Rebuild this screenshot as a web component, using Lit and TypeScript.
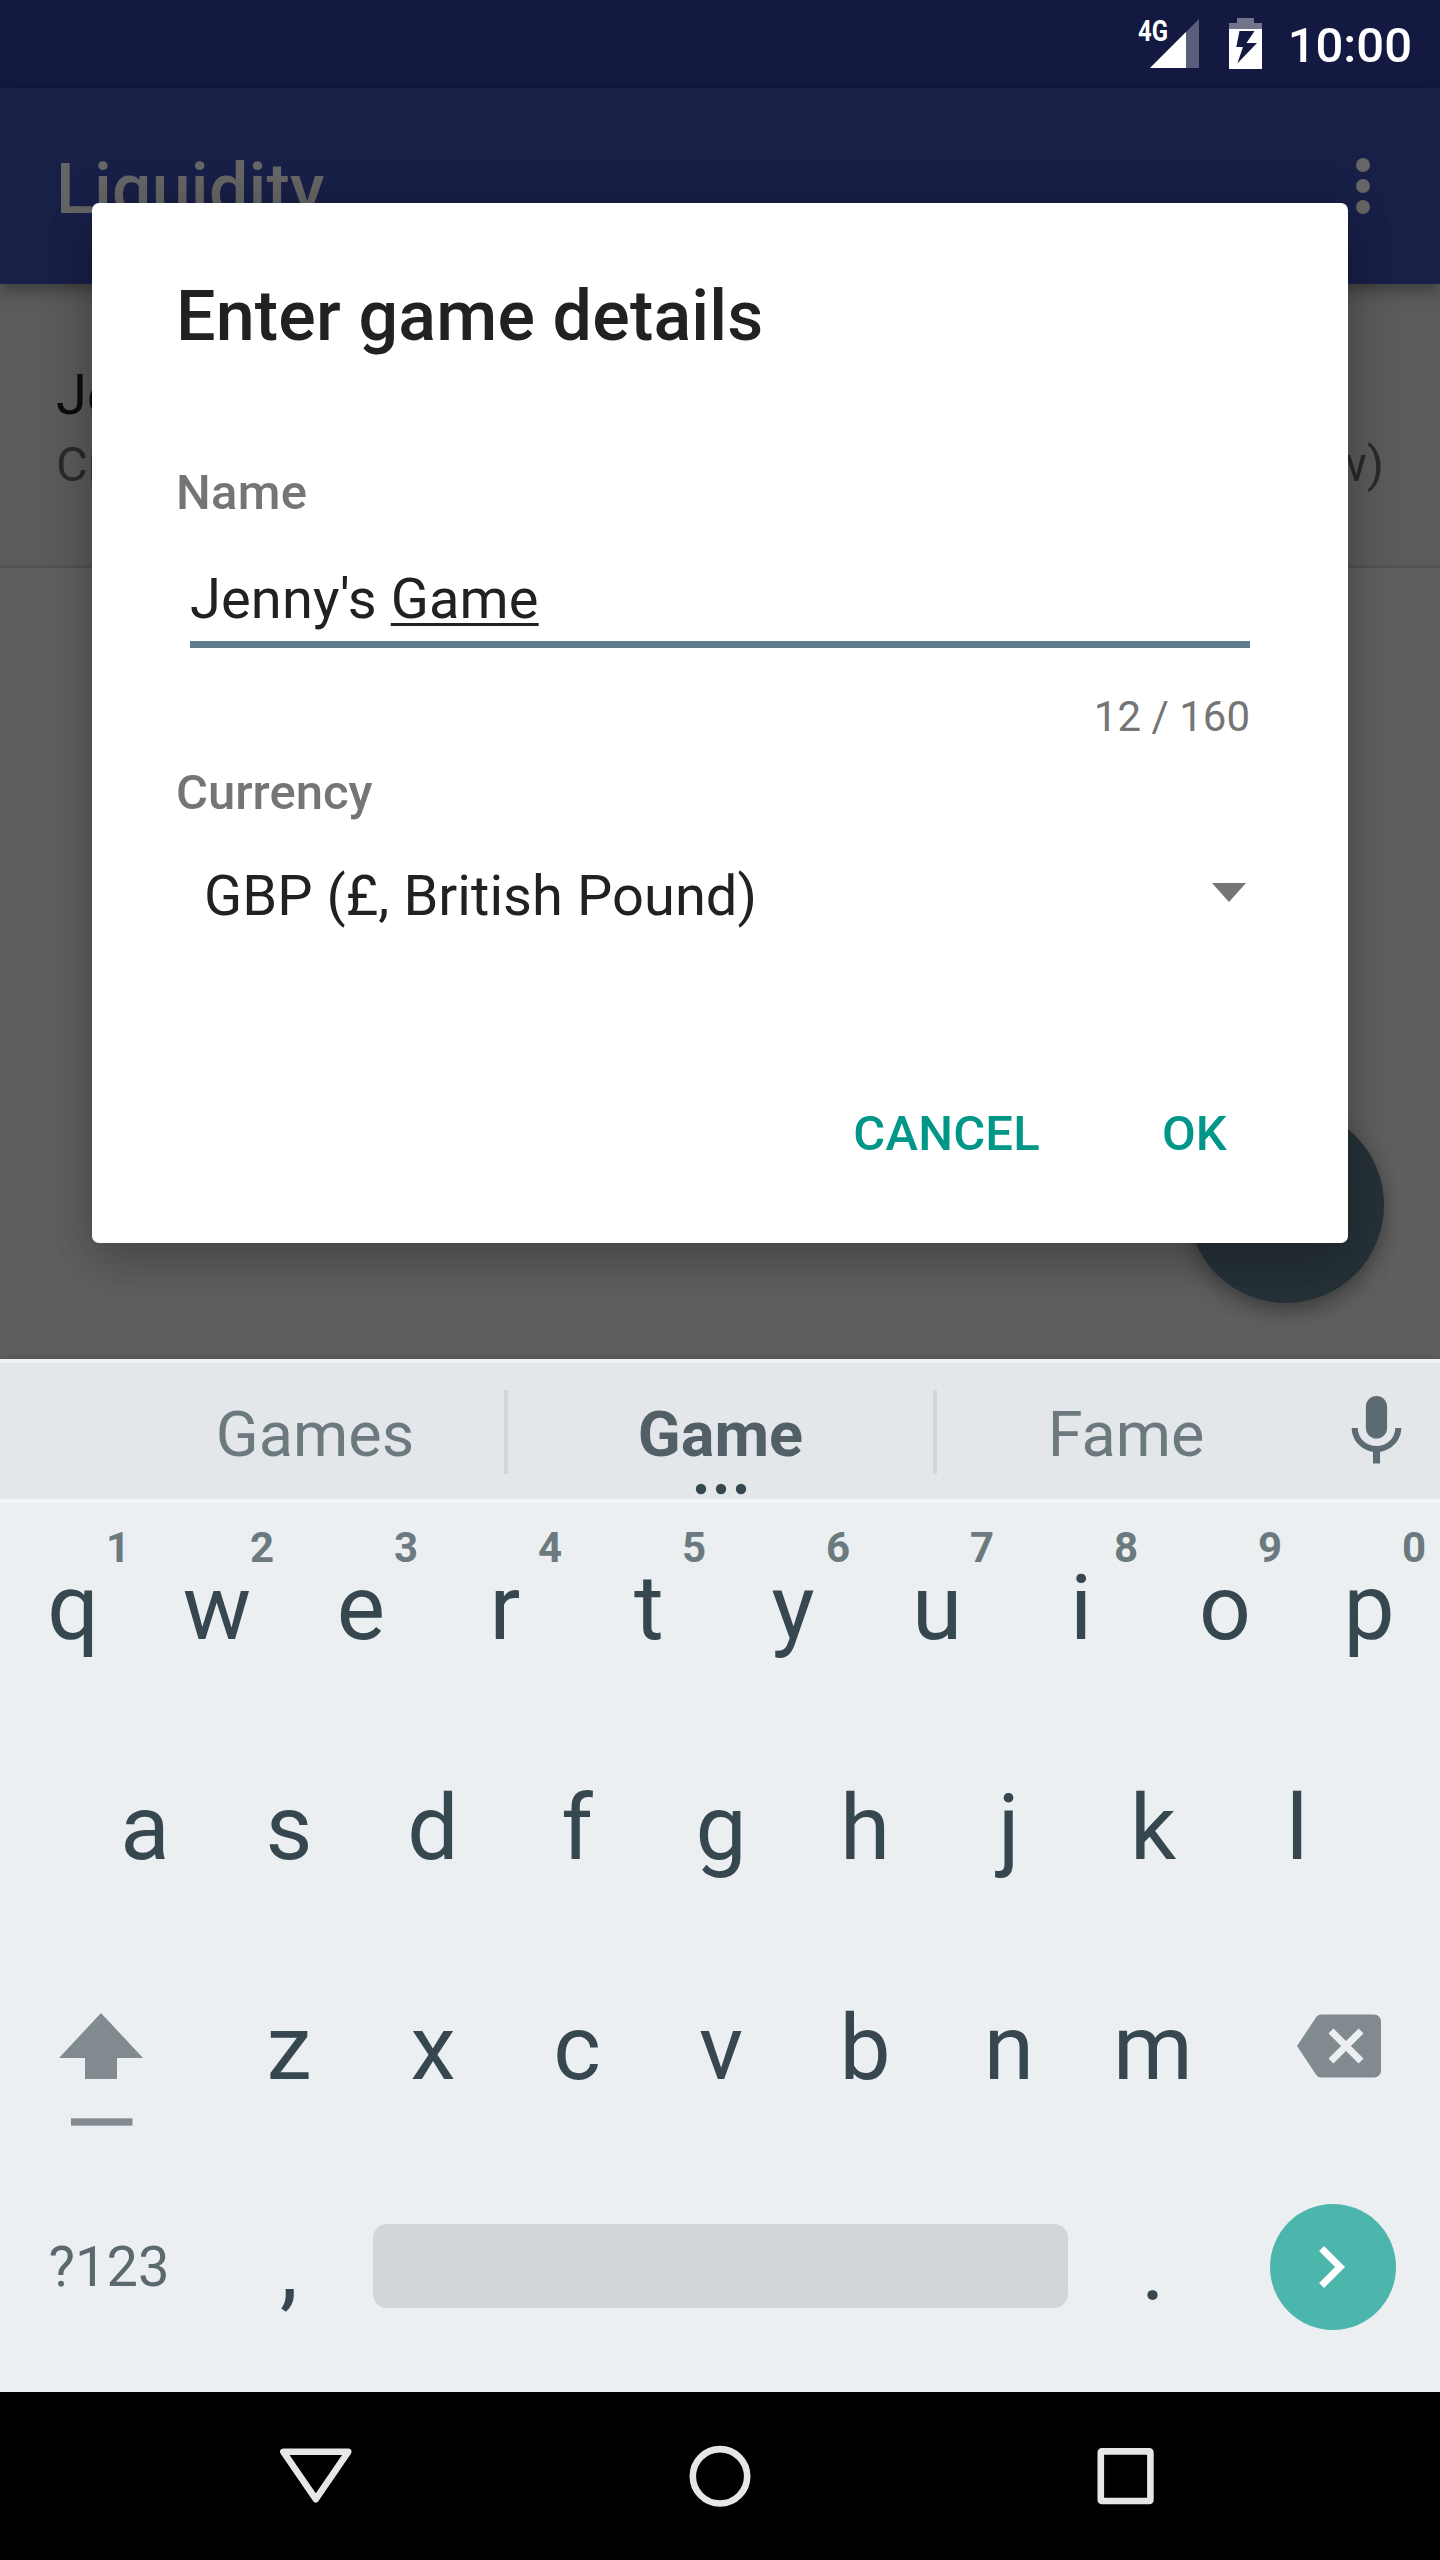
import { LitElement, html, css } from "lit";
import { customElement, property } from "lit/decorators.js";

const ROW_ONE = ["q", "w", "e", "r", "t", "y", "u", "i", "o", "p"];
const ROW_TWO = ["a", "s", "d", "f", "g", "h", "j", "k", "l"];
const ROW_THREE = ["z", "x", "c", "v", "b", "n", "m"];

@customElement("status-bar")
class StatusBar extends LitElement {
  static styles = css`
    :host {
      display: flex;
      justify-content: flex-end;
      height: 88px;
      padding-right: 28px;
      box-sizing: border-box;
      background: #131940;
      color: #fff;
    }
    .signal { width: 64px; height: 88px; flex: none; }
    .battery { width: 33px; height: 88px; flex: none; margin-left: 28px; }
    .network { font: 700 29px Roboto, sans-serif; }
    .time { margin-left: 26px; font-size: 49px; font-weight: 500; line-height: 92px; }
  `;
  render() {
    return html`
      <svg class="signal" viewBox="0 0 64 88">
        <text class="network" x="1" y="41" fill="#fff" textLength="30" lengthAdjust="spacingAndGlyphs">4G</text>
        <path d="M13 68L62 19V68z" fill="#5a5e7b" />
        <path d="M13 68L49 32V68z" fill="#fff" />
      </svg>
      <svg class="battery" viewBox="0 0 33 88">
        <path d="M8 18H25V23H33V29H0V23H8z" fill="#71748b" />
        <path d="M0 29H33V69H0z" fill="#fff" />
        <path d="M10.5 31H25.5L17.5 43H28L8.3 63.5L14 47H7.3z" fill="#131940" />
      </svg>
      <span class="time">10:00</span>
    `;
  }
}

@customElement("game-list")
class GameList extends LitElement {
  static styles = css`
    :host {
      display: flex;
      flex-direction: column;
      isolation: isolate;
      height: 1271px;
      background: #5f5f5f;
    }
    .app-bar {
      display: flex;
      align-items: center;
      justify-content: space-between;
      height: 196px;
      padding: 5px 70px 0 56px;
      box-sizing: border-box;
      background: #192048;
      color: #666;
      box-shadow: 0 5px 16px rgba(0, 0, 0, 0.38);
      z-index: 1;
    }
    .title { font-size: 70px; font-weight: 500; line-height: 82px; letter-spacing: 0.17px; }
    .more { width: 14px; height: 56px; margin-bottom: 5px; }
    .row {
      height: 284px;
      padding: 78px 56px 0;
      box-sizing: border-box;
      background: #5b5b5b;
      border-bottom: 3px solid #535353;
    }
    .name { font-size: 56px; line-height: 66px; color: #0d0d0d; }
    .meta {
      display: flex;
      justify-content: space-between;
      margin-top: 8px;
      font-size: 49px;
      line-height: 57px;
      color: #2a2a2a;
    }
  `;
  render() {
    return html`
      <div class="app-bar">
        <span class="title">Liquidity</span>
        <svg class="more" viewBox="0 0 14 56" fill="#666">
          <circle cx="7" cy="7" r="7" /><circle cx="7" cy="28" r="7" /><circle cx="7" cy="49" r="7" />
        </svg>
      </div>
      <div class="row">
        <div class="name">Jenny's Game</div>
        <div class="meta"><span>Created</span><span>(just now)</span></div>
      </div>
    `;
  }
}

@customElement("details-dialog")
class DetailsDialog extends LitElement {
  static styles = css`
    :host {
      display: flex;
      flex-direction: column;
      box-sizing: border-box;
      padding: 72px 98px 0 84px;
      background: #fff;
      color: #212121;
      border-radius: 7px;
      box-shadow: 0 24px 50px rgba(0, 0, 0, 0.18), 0 0 46px rgba(0, 0, 0, 0.16);
    }
    .title { font-size: 70px; font-weight: 500; line-height: 82px; letter-spacing: 0.17px; }
    .label { font-size: 49px; font-weight: 500; line-height: 57px; color: #757575; }
    .label.first { margin-top: 107px; letter-spacing: 0.3px; }
    .label.second { margin-top: 22px; }
    .input {
      margin: 45px 0 0 14px;
      padding-bottom: 9px;
      border-bottom: 7px solid #607d8b;
      font-size: 56px;
      line-height: 66px;
      letter-spacing: 0.12px;
    }
    .composing {
      text-decoration: underline;
      text-decoration-thickness: 3px;
      text-underline-offset: 5px;
      text-decoration-skip-ink: none;
    }
    .counter { margin-top: 44px; text-align: right; font-size: 42px; line-height: 50px; color: #757575; }
    .select {
      display: flex;
      align-items: center;
      justify-content: space-between;
      margin: 42px 4px 0 28px;
      font-size: 56px;
      line-height: 66px;
      letter-spacing: 0.06px;
    }
    .arrow { width: 34px; height: 19px; margin-bottom: 7px; }
    .actions {
      display: flex;
      justify-content: flex-end;
      gap: 122px;
      margin: 176px 23px 0 0;
      font-size: 49px;
      font-weight: 500;
      line-height: 57px;
      letter-spacing: 0.2px;
      color: #009688;
    }
  `;
  render() {
    return html`
      <div class="title">Enter game details</div>
      <div class="label first">Name</div>
      <div class="input">Jenny's <span class="composing">Game</span></div>
      <div class="counter">12 / 160</div>
      <div class="label second">Currency</div>
      <div class="select">
        <span>GBP (£, British Pound)</span>
        <svg class="arrow" viewBox="0 0 34 19"><path d="M0 0H34L17 19z" fill="#757575" /></svg>
      </div>
      <div class="actions"><span>CANCEL</span><span>OK</span></div>
    `;
  }
}

@customElement("letter-key")
class LetterKey extends LitElement {
  @property() label = "";
  @property() hint = "";
  static styles = css`
    :host {
      position: relative;
      display: block;
      width: 144px;
      padding-left: 2px;
      box-sizing: border-box;
      text-align: center;
      font-size: 91px;
      line-height: 210px;
      color: #37474f;
    }
    .hint {
      position: absolute;
      top: 20px;
      right: 14px;
      font-size: 42px;
      font-weight: 700;
      line-height: 50px;
      color: #6c7a80;
    }
  `;
  render() {
    return html`${this.label}${this.hint ? html`<span class="hint">${this.hint}</span>` : ""}`;
  }
}

@customElement("soft-keyboard")
class SoftKeyboard extends LitElement {
  static styles = css`
    :host {
      display: block;
      position: relative;
      height: 1033px;
      background: #ebeff2;
      box-shadow: 0 -1px 8px rgba(0, 0, 0, 0.16);
    }
    .strip {
      display: flex;
      align-items: center;
      height: 140px;
      padding: 0 0 0 126px;
      box-sizing: border-box;
      border-top: 4px solid #f3f3f5;
      background: #e3e7ea;
      font-size: 63px;
      line-height: 74px;
      color: #6c7a80;
    }
    .word { position: relative; width: 378px; text-align: center; padding-top: 7px; }
    .word.main { width: 425px; font-weight: 700; color: #525f66; }
    .dots { position: absolute; left: 187px; bottom: -23px; width: 52px; height: 12px; }
    .divider { width: 4px; height: 84px; background: #d1d6d8; margin-top: 2px; }
    .mic { width: 85px; height: 85px; margin: 1px 0 0 19px; }
    .keys {
      display: flex;
      flex-direction: column;
      gap: 10px;
      border-top: 4px solid #f5f6f8;
    }
    .row { display: flex; justify-content: center; height: 210px; }
    .wide { display: flex; justify-content: center; align-items: center; width: 216px; padding: 0 0 3px 1px; box-sizing: border-box; }
    .shift { width: 84px; height: 113px; margin: 46px 15px 0 0; }
    .back { width: 84px; height: 84px; margin: 0 0 2px 13px; }
    .symbols { padding-left: 2px; font-size: 56px; color: #5b696f; }
    .space-slot { display: flex; justify-content: center; align-items: center; width: 720px; padding-bottom: 4px; box-sizing: border-box; }
    .space { width: 695px; height: 84px; border-radius: 14px; background: #d1d6d9; }
    .enter {
      display: flex;
      justify-content: center;
      align-items: center;
      width: 126px;
      height: 126px;
      border-radius: 50%;
      background: #4db6ac;
    }
    .chevron { width: 84px; height: 84px; margin-right: 3px; }
  `;
  render() {
    return html`
      <div class="strip">
        <span class="word">Games</span>
        <span class="divider"></span>
        <span class="word main">Game
          <svg class="dots" viewBox="0 0 52 12" fill="#37474f">
            <circle cx="6" cy="6" r="5.2" /><circle cx="26" cy="6" r="5.2" /><circle cx="46" cy="6" r="5.2" />
          </svg>
        </span>
        <span class="divider"></span>
        <span class="word">Fame</span>
        <svg class="mic" viewBox="0 0 24 24" fill="#5c6a71">
          <path d="M12 14c1.66 0 2.99-1.34 2.99-3L15 5c0-1.66-1.34-3-3-3S9 3.34 9 5v6c0 1.66 1.34 3 3 3zm5.3-3c0 3-2.54 5.1-5.3 5.1S6.7 14 6.7 11H5c0 3.41 2.72 6.23 6 6.72V21h2v-3.28c3.28-.48 6-3.3 6-6.72h-1.7z" />
        </svg>
      </div>
      <div class="keys">
        <div class="row">
          ${ROW_ONE.map((k, i) => html`<letter-key label=${k} hint=${String((i + 1) % 10)}></letter-key>`)}
        </div>
        <div class="row">${ROW_TWO.map((k) => html`<letter-key label=${k}></letter-key>`)}</div>
        <div class="row">
          <span class="wide">
            <svg class="shift" viewBox="0 0 84 113" fill="#818b8f">
              <path d="M42 0L84 45H58V66H26V45H0z" /><rect x="12" y="105.3" width="61.5" height="7.4" />
            </svg>
          </span>
          ${ROW_THREE.map((k) => html`<letter-key label=${k}></letter-key>`)}
          <span class="wide">
            <svg class="back" viewBox="0 0 24 24" fill="#818b8f">
              <path d="M22 3H7c-.69 0-1.23.35-1.59.88L0 12l5.41 8.11c.36.53.9.89 1.59.89h15c1.1 0 2-.9 2-2V5c0-1.1-.9-2-2-2zm-3 12.59L17.59 17 14 13.41 10.41 17 9 15.59 12.59 12 9 8.41 10.41 7 14 10.59 17.59 7 19 8.41 15.41 12 19 15.59z" />
            </svg>
          </span>
        </div>
        <div class="row">
          <span class="wide symbols">?123</span>
          <letter-key label=","></letter-key>
          <span class="space-slot"><span class="space"></span></span>
          <letter-key label="."></letter-key>
          <span class="wide">
            <span class="enter">
              <svg class="chevron" viewBox="0 0 24 24" fill="#fff">
                <path d="M10 6L8.59 7.41 13.17 12l-4.58 4.59L10 18l6-6z" />
              </svg>
            </span>
          </span>
        </div>
      </div>
    `;
  }
}

@customElement("nav-bar")
class NavBar extends LitElement {
  static styles = css`
    :host {
      display: flex;
      justify-content: center;
      align-items: center;
      gap: 321px;
      height: 168px;
      background: #000;
    }
    .icon { width: 84px; height: 84px; fill: none; stroke: #e6e6e6; stroke-width: 6.6; stroke-linejoin: round; }
  `;
  render() {
    return html`
      <svg class="icon" viewBox="0 0 84 84"><path d="M10.4 17.8H75.2L42.8 65.2z" /></svg>
      <svg class="icon" viewBox="0 0 84 84"><circle cx="42" cy="42.3" r="27.2" /></svg>
      <svg class="icon" viewBox="0 0 84 84"><rect x="17.8" y="17.4" width="49.6" height="49.6" rx="1" /></svg>
    `;
  }
}

@customElement("app-root")
class AppRoot extends LitElement {
  static styles = css`
    :host {
      position: relative;
      display: flex;
      flex-direction: column;
      width: 1440px;
      height: 2560px;
      overflow: hidden;
      font-family: Roboto, sans-serif;
    }
    .fab {
      position: absolute;
      left: 1188px;
      top: 1107px;
      width: 196px;
      height: 196px;
      border-radius: 50%;
      background: #263238;
      box-shadow: 0 9px 20px rgba(0, 0, 0, 0.32);
    }
    .dialog {
      position: absolute;
      left: 92px;
      top: 203px;
      width: 1256px;
      height: 1040px;
    }
  `;
  render() {
    return html`
      <status-bar></status-bar>
      <game-list></game-list>
      <div class="fab"></div>
      <details-dialog class="dialog"></details-dialog>
      <soft-keyboard></soft-keyboard>
      <nav-bar></nav-bar>
    `;
  }
}
